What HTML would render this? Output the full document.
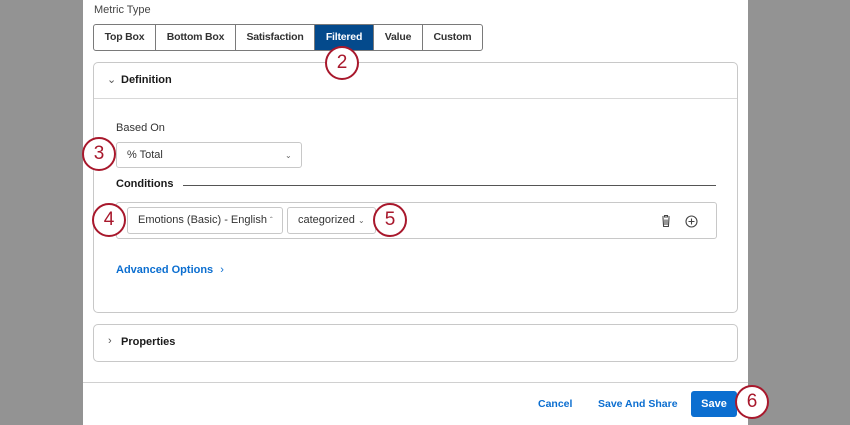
<!DOCTYPE html>
<html><head><style>
*{box-sizing:border-box;margin:0;padding:0}
body{width:850px;height:425px;background:#939393;position:relative;overflow:hidden;font-family:"Liberation Sans",sans-serif;color:#1a1a1a}
.a{position:absolute}
.modal{left:83px;top:0;width:665px;height:425px;background:#fff}
.t{font-size:11px}
.tabs{left:93px;top:24px;height:27px;display:flex;border:1px solid #7a7a7a;border-radius:3px;overflow:hidden}
.tabs div{font-size:10.5px;font-weight:bold;text-align:center;line-height:25px;border-right:1px solid #7a7a7a;color:#333;letter-spacing:-0.2px}
.tabs div:last-child{border-right:none}
.tabs .on{background:#044a8c;color:#fff}
.panel{border:1px solid #c8c8c8;border-radius:5px;background:#fff}
.dd{border:1px solid #c8c8c8;border-radius:3px;font-size:11px;color:#333;line-height:25px;padding-left:10px}
.circ{width:34px;height:34px;border:2.5px solid #a8182c;border-radius:50%;background:#fff;color:#a8182c;font-size:19px;text-align:center;line-height:29px}
.b{font-weight:bold}
</style></head><body>
<div class="a modal"></div>
<div class="a t" style="left:94px;top:4px;color:#444">Metric Type</div>
<div class="a tabs"><div style="width:62px">Top Box</div><div style="width:80px">Bottom Box</div><div style="width:79px">Satisfaction</div><div class="on" style="width:59px">Filtered</div><div style="width:49px">Value</div><div style="width:59px">Custom</div></div>

<div class="a panel" style="left:93px;top:62px;width:645px;height:251px"></div>
<div class="a" style="left:94px;top:98px;width:643px;height:1px;background:#d8d8d8"></div>
<div class="a t" style="left:107px;top:73px;color:#555">&#8964;</div>
<div class="a t b" style="left:121px;top:74px">Definition</div>
<div class="a t" style="left:116px;top:122px;color:#333">Based On</div>
<div class="a dd" style="left:116px;top:142px;width:186px;height:26px">% Total<span style="position:absolute;left:168px;font-size:8px;color:#666">&#8964;</span></div>
<div class="a t b" style="left:116px;top:178px">Conditions</div>
<div class="a" style="left:183px;top:185px;width:533px;height:1px;background:#555"></div>
<div class="a" style="left:116px;top:202px;width:601px;height:37px;border:1px solid #c8c8c8;border-radius:3px"></div>
<div class="a dd" style="left:127px;top:207px;width:156px;height:27px;line-height:25px">Emotions (Basic) - English <span style="font-size:8px;color:#666">&#710;</span></div>
<div class="a dd" style="left:287px;top:207px;width:89px;height:27px;line-height:25px">categorized <span style="font-size:8px;color:#666">&#8964;</span></div>
<svg class="a" style="left:660px;top:214px" width="12" height="14" viewBox="0 0 12 14"><path d="M2 3h8M4.5 3V1.5h3V3M3 4l.6 8.5h4.8L9 4M5 5.5v5.5M7 5.5v5.5" fill="none" stroke="#444" stroke-width="1.1"/></svg>
<svg class="a" style="left:685px;top:215px" width="13" height="13" viewBox="0 0 13 13"><circle cx="6.5" cy="6.5" r="5.5" fill="none" stroke="#444" stroke-width="1.1"/><path d="M6.5 3.5v6M3.5 6.5h6" stroke="#444" stroke-width="1.1"/></svg>
<div class="a t b" style="left:116px;top:264px;color:#0b6ed0">Advanced Options <span style="font-weight:normal;margin-left:4px">&#8250;</span></div>

<div class="a panel" style="left:93px;top:324px;width:645px;height:38px"></div>
<div class="a t" style="left:108px;top:335px;color:#555">&#8250;</div>
<div class="a t b" style="left:121px;top:336px">Properties</div>

<div class="a" style="left:83px;top:382px;width:665px;height:1px;background:#d0d0d0"></div>
<div class="a t b" style="left:538px;top:398px;color:#0b6ed0;font-size:10.5px">Cancel</div>
<div class="a t b" style="left:598px;top:398px;color:#0b6ed0;font-size:10.5px">Save And Share</div>
<div class="a t b" style="left:691px;top:391px;width:46px;height:26px;background:#0b6ed0;color:#fff;border-radius:3px;text-align:center;line-height:26px">Save</div>

<div class="a circ" style="left:325px;top:46px">2</div>
<div class="a circ" style="left:82px;top:137px">3</div>
<div class="a circ" style="left:92px;top:203px">4</div>
<div class="a circ" style="left:373px;top:203px">5</div>
<div class="a circ" style="left:735px;top:385px">6</div>
</body></html>
